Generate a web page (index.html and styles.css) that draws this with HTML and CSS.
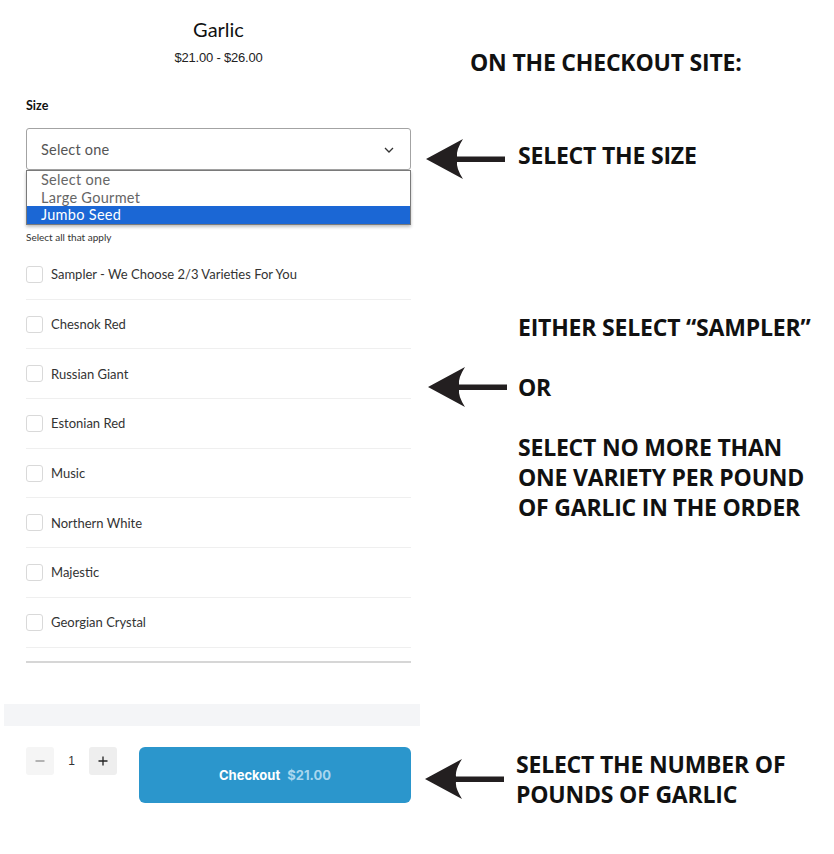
FILE: index.html
```html
<!DOCTYPE html>
<html lang="en">
<head>
<meta charset="utf-8">
<title>Garlic checkout instructions</title>
<link rel="stylesheet" href="styles.css">
</head>
<body>
<div class="page">
  <main class="product">
    <h1 class="title">Garlic</h1>
    <p class="price">$21.00 - $26.00</p>
    <div class="field">
      <div class="label">Size</div>
      <div class="select-wrap">
        <div class="select">
          <span>Select one</span>
          <svg class="chev" width="10" height="6" viewBox="0 0 10 6"><path d="M1 1 L5 5 L9 1" fill="none" stroke="#333" stroke-width="1.3"/></svg>
        </div>
        <ul class="dropdown">
          <li>Select one</li>
          <li>Large Gourmet</li>
          <li class="active">Jumbo Seed</li>
        </ul>
      </div>
    </div>
    <p class="hint">Select all that apply</p>
    <ul class="options">
      <li class="option"><span class="box"></span>Sampler - We Choose 2/3 Varieties For You</li>
      <li class="option"><span class="box"></span>Chesnok Red</li>
      <li class="option"><span class="box"></span>Russian Giant</li>
      <li class="option"><span class="box"></span>Estonian Red</li>
      <li class="option"><span class="box"></span>Music</li>
      <li class="option"><span class="box"></span>Northern White</li>
      <li class="option"><span class="box"></span>Majestic</li>
      <li class="option"><span class="box"></span>Georgian Crystal</li>
    </ul>
    <div class="rule"></div>
    <div class="band"></div>
    <div class="buy">
      <div class="qty">
        <span class="qbtn minus"><svg width="12" height="12" viewBox="0 0 12 12"><path d="M1.5 6 H10.5" stroke="#888" stroke-width="1.2"/></svg></span>
        <span class="qnum">1</span>
        <span class="qbtn plus"><svg width="12" height="12" viewBox="0 0 12 12"><path d="M1.5 6 H10.5 M6 1.5 V10.5" stroke="#222" stroke-width="1.3"/></svg></span>
      </div>
      <div class="checkout">Checkout <span class="amt">$21.00</span></div>
    </div>
  </main>
  <aside class="notes">
    <p class="note head">ON THE CHECKOUT SITE:</p>
    <div class="row row1">
      <svg class="arrow" width="80" height="42" viewBox="0 0 80 42"><path d="M0 21 L37 1 Q30 12 31 18.5 L79 18.5 L79 24 L31 24 Q30 30 37 41 Z" fill="#231f20"/></svg>
      <p class="note">SELECT THE SIZE</p>
    </div>
    <div class="row row2">
      <svg class="arrow" width="80" height="42" viewBox="0 0 80 42"><path d="M0 21 L37 1 Q30 12 31 18.5 L79 18.5 L79 24 L31 24 Q30 30 37 41 Z" fill="#231f20"/></svg>
      <div class="note-block">
        <p class="note">EITHER SELECT “SAMPLER”</p>
        <p class="note gap">OR</p>
        <p class="note gap">SELECT NO MORE THAN<br>ONE VARIETY PER POUND<br>OF GARLIC IN THE ORDER</p>
      </div>
    </div>
    <div class="row row3">
      <svg class="arrow" width="80" height="42" viewBox="0 0 80 42"><path d="M0 21 L37 1 Q30 12 31 18.5 L79 18.5 L79 24 L31 24 Q30 30 37 41 Z" fill="#231f20"/></svg>
      <p class="note">SELECT THE NUMBER OF<br>POUNDS OF GARLIC</p>
    </div>
  </aside>
</div>
</body>
</html>
```
FILE: styles.css
```css
* { box-sizing: border-box; }
html, body { margin: 0; padding: 0; background: #fff; }
body { font-family: "Lato", "Open Sans", sans-serif; color: #222; }
p, h1, ul { margin: 0; padding: 0; }
ul { list-style: none; }

.page { display: flex; width: 834px; height: 854px; }

.product {
  width: 420px;
  flex: none;
  padding: 17px 9px 0 26px;
  display: flex;
  flex-direction: column;
}
.title {
  font-family: "Lato", sans-serif;
  font-weight: 400;
  font-size: 20px;
  line-height: 24px;
  text-align: center;
  color: #111;
}
.price {
  margin-top: 9px;
  font-family: "Liberation Sans", Arial, sans-serif;
  font-size: 13px;
  line-height: 16px;
  letter-spacing: -0.2px;
  text-align: center;
  color: #222;
}
.field { margin-top: 32px; }
.label {
  font-weight: 700;
  font-size: 12.5px;
  line-height: 16px;
  color: #111;
}
.select-wrap { position: relative; margin-top: 14px; }
.select {
  height: 42px;
  border: 1px solid #a3a3a3;
  border-radius: 3px;
  display: flex;
  align-items: center;
  justify-content: space-between;
  padding: 0 16px 0 14px;
  font-size: 14.5px;
  color: #555;
  letter-spacing: 0.2px;
}
.chev { margin-top: 1px; }
.dropdown {
  position: absolute;
  left: 0;
  right: 0;
  top: 42px;
  border: 1px solid #7a7a7a;
  background: #fff;
  box-shadow: 0 2px 3px rgba(0,0,0,0.25);
  font-size: 14.5px;
  color: #666;
  letter-spacing: 0.3px;
  z-index: 2;
}
.dropdown li { height: 17.7px; line-height: 17.7px; padding-left: 14px; }
.dropdown li.active { background: #1b67d5; color: #fff; }

.hint {
  margin-top: 60px;
  font-size: 10px;
  line-height: 14px;
  color: #333;
}
.options { margin-top: 6px; }
.option {
  height: 49.7px;
  border-bottom: 1px solid #efefef;
  display: flex;
  align-items: center;
  font-size: 13px;
  color: #333;
}
.box {
  width: 17px;
  height: 17px;
  border: 1px solid #d9d9d9;
  border-radius: 3px;
  margin-right: 8px;
  flex: none;
}
.rule {
  margin-top: 13px;
  height: 2px;
  background: #d6d6d6;
}
.band {
  margin: 41px -9px 0 -22px;
  height: 22px;
  background: #f4f5f7;
}
.buy {
  margin-top: 21px;
  display: flex;
  align-items: flex-start;
}
.qty { display: flex; align-items: center; }
.qbtn {
  width: 28px;
  height: 28px;
  border-radius: 3px;
  display: flex;
  align-items: center;
  justify-content: center;
}
.minus { background: #f5f5f5; }
.plus { background: #eeeeee; }
.qnum {
  width: 35px;
  text-align: center;
  font-size: 12px;
  color: #333;
  font-family: "Liberation Sans", sans-serif;
}
.checkout {
  margin-left: 22px;
  flex: 1;
  height: 56px;
  background: #2b96cc;
  border-radius: 6px;
  display: flex;
  align-items: center;
  justify-content: center;
  font-family: "Inter", sans-serif;
  font-weight: 700;
  font-size: 13px;
  color: #fff;
  gap: 4px;
}
.amt { color: #a9d6ee; margin-left: 3px; }

.notes {
  flex: 1;
  padding-top: 47px;
  display: flex;
  flex-direction: column;
  font-family: "Open Sans", sans-serif;
}
.note {
  font-family: "Open Sans", sans-serif;
  font-weight: 700;
  font-size: 23px;
  line-height: 30px;
  letter-spacing: -0.2px;
  color: #111;
  white-space: nowrap;
}
.head { margin-left: 50px; }
.row { display: flex; align-items: flex-start; }
.arrow { flex: none; }
.row1 { margin-top: 61px; }
.row1 .arrow { margin-left: 6px; }
.row1 .note { margin-left: 12px; margin-top: 2px; }
.row2 { margin-top: 132px; }
.row2 .arrow { margin-left: 8px; margin-top: 54px; }
.row2 .note-block { margin-left: 10px; }
.note.gap { margin-top: 30px; }
.row3 { margin-top: 227px; align-items: center; }
.row3 .arrow { margin-left: 5px; }
.row3 .note { margin-left: 11px; }
```
